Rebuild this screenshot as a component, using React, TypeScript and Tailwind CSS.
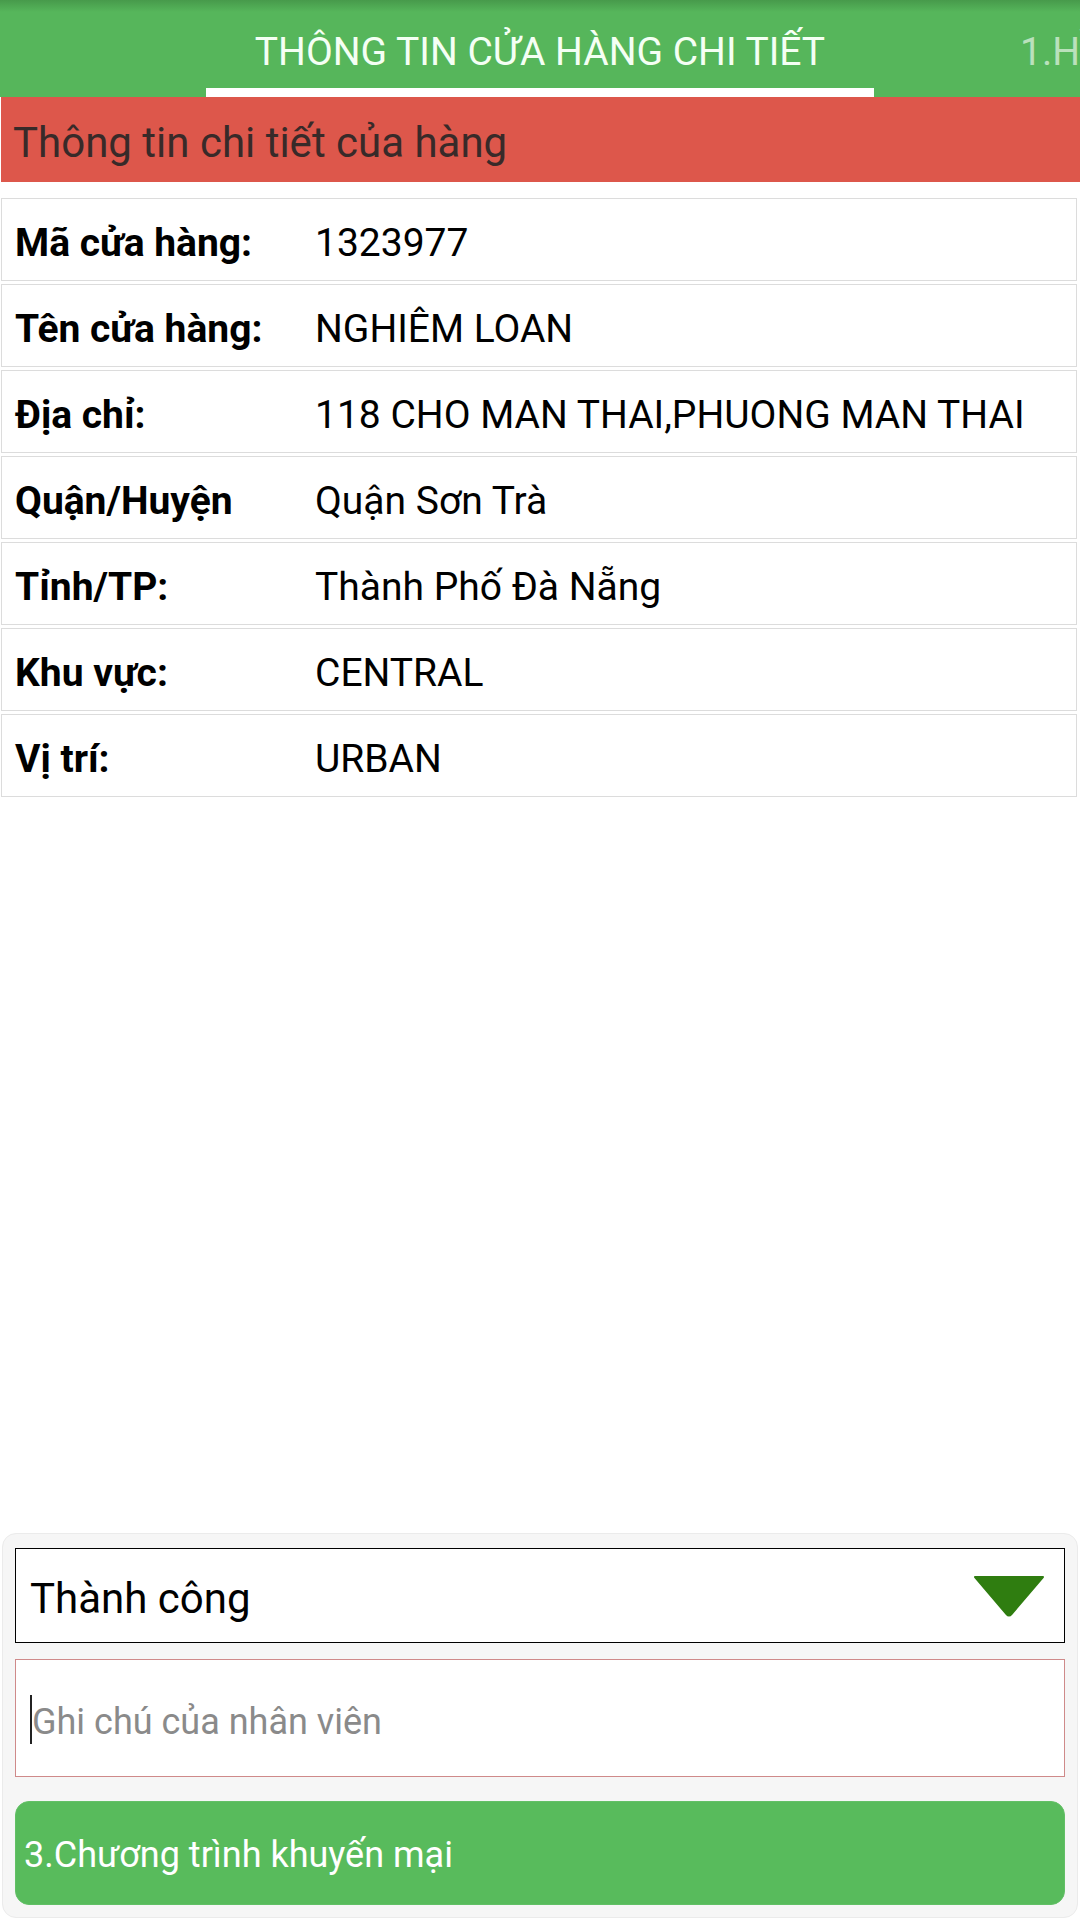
import { FC } from "react"

interface InfoRow {
  label: string
  value: string
}

const rows: InfoRow[] = [
  { label: "Mã cửa hàng:", value: "1323977" },
  { label: "Tên cửa hàng:", value: "NGHIÊM LOAN" },
  { label: "Địa chỉ:", value: "118 CHO MAN THAI,PHUONG MAN THAI" },
  { label: "Quận/Huyện", value: "Quận Sơn Trà" },
  { label: "Tỉnh/TP:", value: "Thành Phố Đà Nẵng" },
  { label: "Khu vực:", value: "CENTRAL" },
  { label: "Vị trí:", value: "URBAN" },
]

const font = { fontFamily: "Roboto, 'Noto Sans', sans-serif" }

const TabBar: FC = () => (
  <div className="relative h-[97px] shrink-0 bg-[#56b65b] overflow-hidden">
    <div className="absolute inset-x-0 top-0 h-[12px] bg-gradient-to-b from-[#479a4b] to-[#56b65b]" />
    <div className="relative flex h-full">
      <div className="w-[206px] shrink-0" />
      <div className="flex w-[668px] shrink-0 flex-col items-center">
        <div className="pt-[33px] text-[39px] leading-none text-[#f4fff4] whitespace-nowrap">
          THÔNG TIN CỬA HÀNG CHI TIẾT
        </div>
        <div className="mt-auto h-[9px] w-full bg-white" />
      </div>
      <div className="pl-[146px] pt-[33px] text-[39px] leading-none text-white/60 whitespace-nowrap">
        1.HÌNH ẢNH
      </div>
    </div>
  </div>
)

const Row: FC<{ row: InfoRow }> = ({ row }) => (
  <div className="ml-[1px] mr-[3px] grid h-[83px] grid-cols-[300px_1fr] items-center border border-[#dcdcdc] pl-[13px] pt-[7px] text-[39px] text-black">
    <span className="font-bold whitespace-nowrap">{row.label}</span>
    <span className="whitespace-nowrap">{row.value}</span>
  </div>
)

export default function App() {
  return (
    <div className="flex h-[1920px] w-[1080px] flex-col overflow-hidden bg-white" style={font}>
      <TabBar />

      <div className="ml-[1px] flex h-[85px] shrink-0 items-center bg-[#dd574b] pl-[12px] pt-[6px] text-[42px] text-[#382a29]">
        Thông tin chi tiết của hàng
      </div>

      <div className="mt-[16px] flex flex-col gap-[3px]">
        {rows.map((row) => (
          <Row key={row.label} row={row} />
        ))}
      </div>

      <div className="flex-1" />

      <div className="mx-[2px] mb-[2px] rounded-[14px] border border-[#ebebeb] bg-[#f6f6f6] px-[12px] pb-[12px] pt-[14px]">
        <div className="flex h-[95px] items-center justify-between border border-black bg-white pl-[14px] pr-[19px]">
          <span className="pt-[6px] text-[42px] text-black">Thành công</span>
          <svg width="72" height="42" viewBox="0 0 72 42">
            <path d="M2 2 L70 2 L38.5 39 Q36 42 33.5 39 Z" fill="#2f7d10" stroke="#2f7d10" strokeWidth="2" strokeLinejoin="round" />
          </svg>
        </div>

        <div className="mt-[16px] flex h-[118px] items-center border border-[#cf8a8a] bg-white pl-[14px] pt-[2px]">
          <span className="h-[49px] w-[2px] bg-[#222]" />
          <span className="pt-[5px] text-[36px] text-[#8a8a8a]">Ghi chú của nhân viên</span>
        </div>

        <button className="mt-[24px] flex h-[104px] w-full items-center rounded-[14px] border border-[#62c066] bg-[#58bb5c] pl-[8px] pt-[4px] text-[36px] text-white">
          3.Chương trình khuyến mại
        </button>
      </div>
    </div>
  )
}
